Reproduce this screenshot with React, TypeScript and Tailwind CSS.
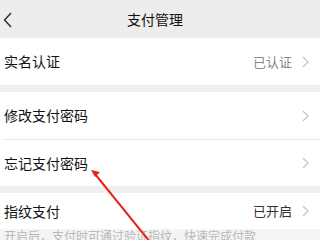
const font = { fontFamily: '"Noto Sans CJK SC", "Noto Sans", sans-serif' };

function Chevron({ color = '#c4c4c4' }: { color?: string }) {
  return (
    <svg width="7" height="12" viewBox="0 0 7 12" fill="none">
      <path d="M1 1l5 5-5 5" stroke={color} strokeWidth="1.2" />
    </svg>
  );
}

function Row({ label, value, valueClass = 'text-[#888888]', h = 'h-[47px]' }: { label: string; value?: string; valueClass?: string; h?: string }) {
  return (
    <div className={`flex ${h} items-center justify-between bg-white pl-1 pr-[11px]`}>
      <span className="text-[14px] text-[#111111]">{label}</span>
      <div className="flex items-center gap-[10px]">
        {value && <span className={`text-[13px] ${valueClass}`}>{value}</span>}
        <Chevron />
      </div>
    </div>
  );
}

export default function App() {
  return (
    <div className="relative h-[240px] w-[320px] overflow-hidden bg-[#efefef]" style={font}>
      <div className="relative flex h-[38px] items-center justify-center bg-[#ededed] pr-[10px]">
        <svg className="absolute left-[3px] top-[12px]" width="10" height="16" viewBox="0 0 10 16" fill="none">
          <path d="M8 1L1.5 8 8 15" stroke="#222" strokeWidth="1.3" />
        </svg>
        <span className="text-[14px] text-[#111]">支付管理</span>
      </div>

      <Row label="实名认证" value="已认证" />
      <div className="h-[7px]" />
      <Row label="修改支付密码" />
      <div className="bg-white pl-1">
        <div className="border-b border-[#e6e6e6]" />
      </div>
      <Row label="忘记支付密码" h="h-[46px]" />
      <div className="h-[7px]" />
      <Row label="指纹支付" value="已开启" valueClass="text-[#333333]" h="h-[36px]" />
      <div className="bg-[#f4f4f4] pl-1 text-[12px] leading-[14px] text-[#b8b8b8]">
        开启后，支付时可通过验证指纹，快速完成付款
      </div>

      <svg className="absolute left-0 top-0" width="320" height="240" viewBox="0 0 320 240" fill="none">
        <line x1="150" y1="242" x2="95" y2="174" stroke="#e8221a" strokeWidth="2" />
        <path d="M91 170l9 2-5 5z" fill="#e8221a" />
      </svg>
    </div>
  );
}
